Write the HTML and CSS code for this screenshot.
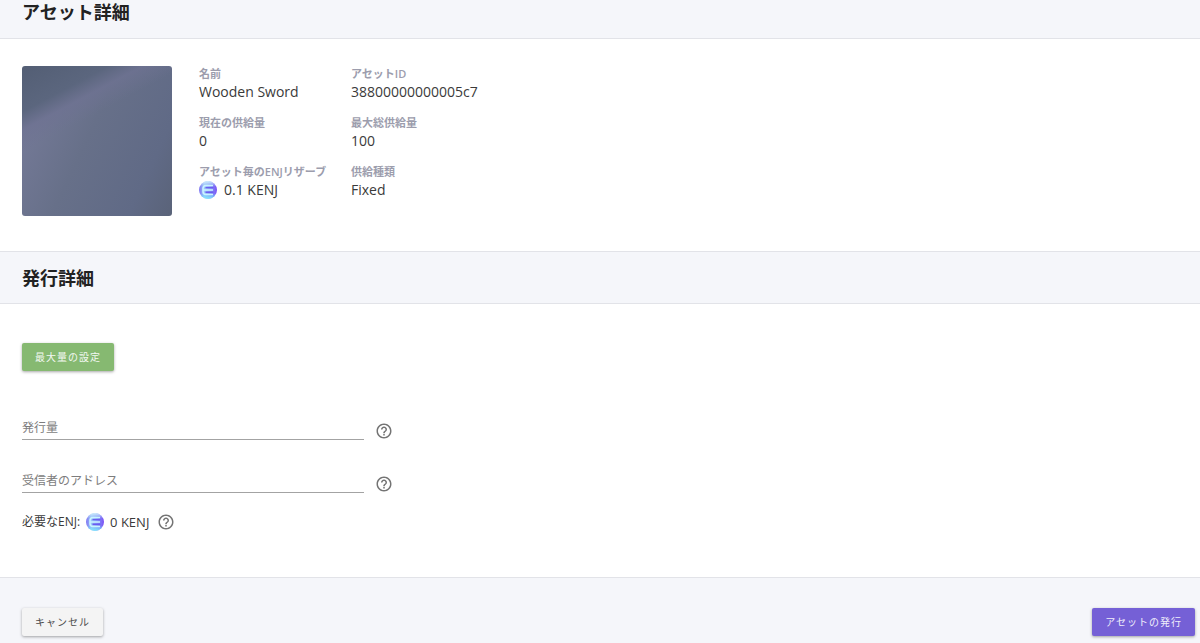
FILE: index.html
```html
<!DOCTYPE html>
<html lang="ja">
<head>
    <meta charset="UTF-8">
    <meta name="viewport" content="width=device-width, initial-scale=1.0">
    <title>アセットの発行</title>
    <link rel="stylesheet" href="styles.css">
</head>
<body>
    <!-- Shared icons -->
    <svg class="icon-defs" aria-hidden="true">
        <defs>
            <linearGradient id="coinFill" x1="0" y1="0" x2="1" y2="0">
                <stop offset="0" stop-color="#7f74f2"/>
                <stop offset="0.3" stop-color="#9cc8fa"/>
                <stop offset="0.65" stop-color="#8598f7"/>
                <stop offset="1" stop-color="#7a4ff5"/>
            </linearGradient>
            <linearGradient id="coinGlow" x1="0" y1="0" x2="0" y2="1">
                <stop offset="0" stop-color="#d5f5fc"/>
                <stop offset="0.3" stop-color="#b5d0fa" stop-opacity="0"/>
                <stop offset="0.7" stop-color="#5ce0fa" stop-opacity="0"/>
                <stop offset="1" stop-color="#8beafc"/>
            </linearGradient>
            <symbol id="coin" viewBox="0 0 18 18">
                <circle cx="9" cy="9" r="9" fill="url(#coinFill)"/>
                <circle cx="9" cy="9" r="9" fill="url(#coinGlow)"/>
                <path d="M14 4.500H7Q4 4.500 4 7.500V10.500Q4 13.500 7 13.500H14M4.500 9H14" fill="none" stroke="#c9f4ff" stroke-width="1.600"/>
                <path d="M6.500 6.600H14.500M6.500 11.300H14.500" fill="none" stroke="#6a5cf0" stroke-width="1.400"/>
            </symbol>
            <symbol id="help" viewBox="0 0 24 24">
                <path d="M11 18h2v-2h-2v2zm1-16C6.480 2 2 6.480 2 12s4.480 10 10 10 10-4.480 10-10S17.520 2 12 2zm0 18c-4.410 0-8-3.590-8-8s3.590-8 8-8 8 3.590 8 8-3.590 8-8 8zm0-14c-2.210 0-4 1.790-4 4h2c0-1.100.9-2 2-2s2 .9 2 2c0 2-3 1.750-3 5h2c0-2.250 3-2.500 3-5 0-2.210-1.790-4-4-4z" fill="currentColor"/>
            </symbol>
        </defs>
    </svg>

    <header class="section-header first">
        <h2>アセット詳細</h2>
    </header>

    <section class="asset">
        <div class="asset-image"></div>
        <dl class="asset-details">
            <div>
                <dt>名前</dt>
                <dd>Wooden Sword</dd>
            </div>
            <div>
                <dt>アセットID</dt>
                <dd>38800000000005c7</dd>
            </div>
            <div>
                <dt>現在の供給量</dt>
                <dd>0</dd>
            </div>
            <div>
                <dt>最大総供給量</dt>
                <dd>100</dd>
            </div>
            <div>
                <dt>アセット毎のENJリザーブ</dt>
                <dd><svg class="coin"><use href="#coin"/></svg>0.1 KENJ</dd>
            </div>
            <div>
                <dt>供給種類</dt>
                <dd>Fixed</dd>
            </div>
        </dl>
    </section>

    <header class="section-header">
        <h2>発行詳細</h2>
    </header>

    <form id="mintForm">
        <section class="mint">
            <button type="button" class="btn btn-green">最大量の設定</button>

            <div class="fields">
                <div class="field">
                    <input type="text" id="amount" name="amount" placeholder="発行量" aria-label="発行量">
                    <svg class="help"><use href="#help"/></svg>
                </div>
                <div class="field">
                    <input type="text" id="address" name="address" placeholder="受信者のアドレス" aria-label="受信者のアドレス">
                    <svg class="help"><use href="#help"/></svg>
                </div>
            </div>

            <p class="required">
                <span>必要なENJ:</span>
                <svg class="coin"><use href="#coin"/></svg>
                <span class="amount">0 KENJ</span>
                <svg class="help"><use href="#help"/></svg>
            </p>
        </section>

        <footer class="actions">
            <button type="button" class="btn">キャンセル</button>
            <button type="submit" class="btn btn-purple">アセットの発行</button>
        </footer>
    </form>
</body>
</html>
```
FILE: styles.css
```css
body {
    margin: 0;
    min-height: 100vh;
    display: flex;
    flex-direction: column;
    background-color: #fff;
    color: #3a3a3a;
    font-family: "Open Sans", "Noto Sans CJK JP", sans-serif;
    font-size: 14px;
}

.icon-defs {
    position: absolute;
    width: 0;
    height: 0;
}

/* Section headers */
.section-header {
    background-color: #f5f6fa;
    border-top: 1px solid #e2e3e8;
    border-bottom: 1px solid #e2e3e8;
    padding: 14px 22px 13px;
}

.section-header.first {
    border-top: none;
    padding-top: 0;
    padding-bottom: 14px;
}

h2 {
    margin: 0;
    font-size: 18px;
    line-height: 24px;
    font-weight: bold;
    color: #222;
}

/* Asset details */
.asset {
    display: flex;
    gap: 27px;
    padding: 27px 22px 35px;
}

.asset-image {
    width: 150px;
    height: 150px;
    border-radius: 3px;
    background:
        linear-gradient(152deg, #535e74 0%, #5b667e 20%, rgba(110, 114, 146, 0.75) 28%, rgba(104, 112, 142, 0) 38%),
        linear-gradient(115deg, #757a98 10%, #677089 45%, #606a86 80%, #5a6379 100%);
}

.asset-details {
    display: grid;
    grid-template-columns: 152px auto;
    gap: 12px 0;
    align-content: start;
    margin: 0;
}

dt {
    font-size: 11px;
    line-height: 15px;
    font-weight: 600;
    color: #9c9dad;
    white-space: nowrap;
}

dd {
    display: flex;
    align-items: center;
    gap: 7px;
    margin: 0;
    line-height: 22px;
}

.coin {
    width: 18px;
    height: 18px;
}

.help {
    width: 18px;
    height: 18px;
    color: #747474;
}

/* Mint form */
form {
    flex: 1;
    display: flex;
    flex-direction: column;
}

.mint {
    padding: 39px 22px 45px;
}

.fields {
    display: flex;
    flex-direction: column;
    gap: 24px;
    max-width: 371px;
    margin-top: 40px;
}

.field {
    display: flex;
    align-items: flex-end;
    gap: 11px;
}

.field input {
    flex: 1;
    min-width: 0;
    height: 29px;
    box-sizing: border-box;
    padding: 4px 0 0;
    border: none;
    border-bottom: 1px solid #a3a3a3;
    background: none;
    font-family: inherit;
    font-size: 12px;
    color: #3a3a3a;
}

.field input::placeholder {
    color: #7d7d7d;
    opacity: 1;
}

.required {
    display: flex;
    align-items: center;
    gap: 6px;
    margin: 19px 0 0;
    font-size: 12px;
    line-height: 20px;
}

.required .amount {
    font-size: 13px;
}

.required .help {
    margin-left: 2px;
}

/* Buttons */
.btn {
    height: 28px;
    padding: 0 13px;
    border: none;
    border-radius: 2px;
    background-color: #f4f4f4;
    box-shadow: 0 1px 3px rgba(0, 0, 0, 0.35);
    color: #4a4a4a;
    font-family: inherit;
    font-size: 10px;
    line-height: 28px;
    letter-spacing: 1px;
    cursor: pointer;
}

.btn-green {
    display: block;
    background-color: #86b971;
    color: #f3f8f1;
}

.btn-purple {
    background-color: #7560d6;
    color: #f1effb;
}

.actions {
    flex: 1;
    display: flex;
    justify-content: space-between;
    align-items: flex-start;
    padding: 30px 5px 7px 22px;
    border-top: 1px solid #e2e3e8;
    background-color: #f5f6fa;
}
```
